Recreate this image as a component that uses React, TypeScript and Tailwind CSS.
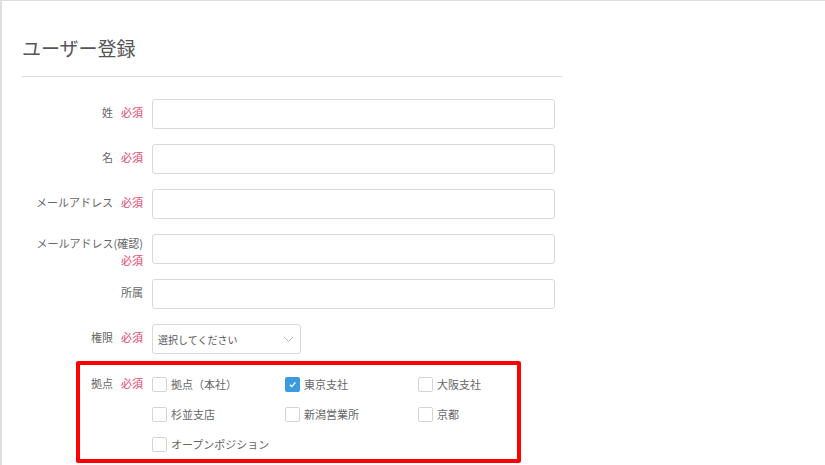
import React from "react";

const F = { fontFamily: '"Noto Sans CJK JP", "Noto Sans", sans-serif' };

function Req() {
  return <span className="text-[11px] text-[#e4456d] ml-[8px]">必須</span>;
}

function Row({ label, req = true, children }: { label: React.ReactNode; req?: boolean; children: React.ReactNode }) {
  return (
    <div className="flex items-center h-[30px]">
      <div className="w-[130px] pr-[9px] pb-[3px] flex justify-end items-center text-[11px] text-[#666] leading-[17px]">
        <span>{label}</span>
        {req && <Req />}
      </div>
      {children}
    </div>
  );
}

function Input({ w = "w-[403px]" }: { w?: string }) {
  return <div className={`${w} h-[30px] border border-[#d9d9d9] rounded-[3px] bg-white shrink-0`} />;
}

function Check({ label, checked = false }: { label: string; checked?: boolean }) {
  return (
    <div className="h-[30px] flex items-center">
      {checked ? (
        <div className="w-[15px] h-[15px] rounded-[2px] bg-[#3a9be0] flex items-center justify-center shrink-0">
          <svg width="9" height="9" viewBox="0 0 10 10">
            <path d="M2 5.2 L4.2 7.3 L8.2 2.8" fill="none" stroke="white" strokeWidth="1.4" />
          </svg>
        </div>
      ) : (
        <div className="w-[15px] h-[15px] rounded-[2px] border border-[#d4d4d4] bg-white shrink-0" />
      )}
      <span className="ml-[4px] text-[11px] text-[#666] whitespace-nowrap">{label}</span>
    </div>
  );
}

export default function App() {
  return (
    <div style={F} className="w-[825px] h-[465px] bg-white border-l-2 border-t border-[#dedede] overflow-hidden">
      <div className="pl-[20px] w-[560px]">
        <h1 className="pt-[33px] text-[19px] leading-[28px] text-[#555] font-normal">ユーザー登録</h1>
        <div className="mt-[14px] h-px bg-[#dcdcdc]" />
        <div className="mt-[22px] flex flex-col gap-[15px]">
          <Row label="姓"><Input /></Row>
          <Row label="名"><Input /></Row>
          <Row label="メールアドレス"><Input /></Row>
          <div className="flex items-start h-[30px]">
            <div className="w-[130px] pr-[9px] flex flex-col items-end text-[11px] text-[#666] leading-[17px] pt-[1px]">
              <span>メールアドレス(確認)</span>
              <span className="text-[#e4456d]">必須</span>
            </div>
            <Input />
          </div>
          <Row label="所属" req={false}><Input /></Row>
          <Row label="権限">
            <div className="w-[149px] h-[30px] border border-[#d9d9d9] rounded-[3px] bg-white flex items-center justify-between pl-[5px] pr-[6px]">
              <span className="text-[10px] text-[#555]">選択してください</span>
              <svg width="11" height="7" viewBox="0 0 11 7">
                <path d="M1 1 L5.5 5.5 L10 1" fill="none" stroke="#bbb" strokeWidth="1" />
              </svg>
            </div>
          </Row>
        </div>
        <div className="mt-[7px] ml-[54px] w-[445px] h-[102px] border-4 border-[#ff0000] rounded-[2px] pt-[4px]">
          <div className="flex items-start">
            <div className="w-[72px] shrink-0 pr-[9px] pb-[1px] h-[30px] flex justify-end items-center text-[11px] text-[#666]">
              <span>拠点</span>
              <Req />
            </div>
            <div className="grid grid-cols-[133px_133px_1fr] flex-1">
              <Check label="拠点（本社）" />
              <Check label="東京支社" checked />
              <Check label="大阪支社" />
              <Check label="杉並支店" />
              <Check label="新潟営業所" />
              <Check label="京都" />
              <Check label="オープンポジション" />
            </div>
          </div>
        </div>
      </div>
    </div>
  );
}
